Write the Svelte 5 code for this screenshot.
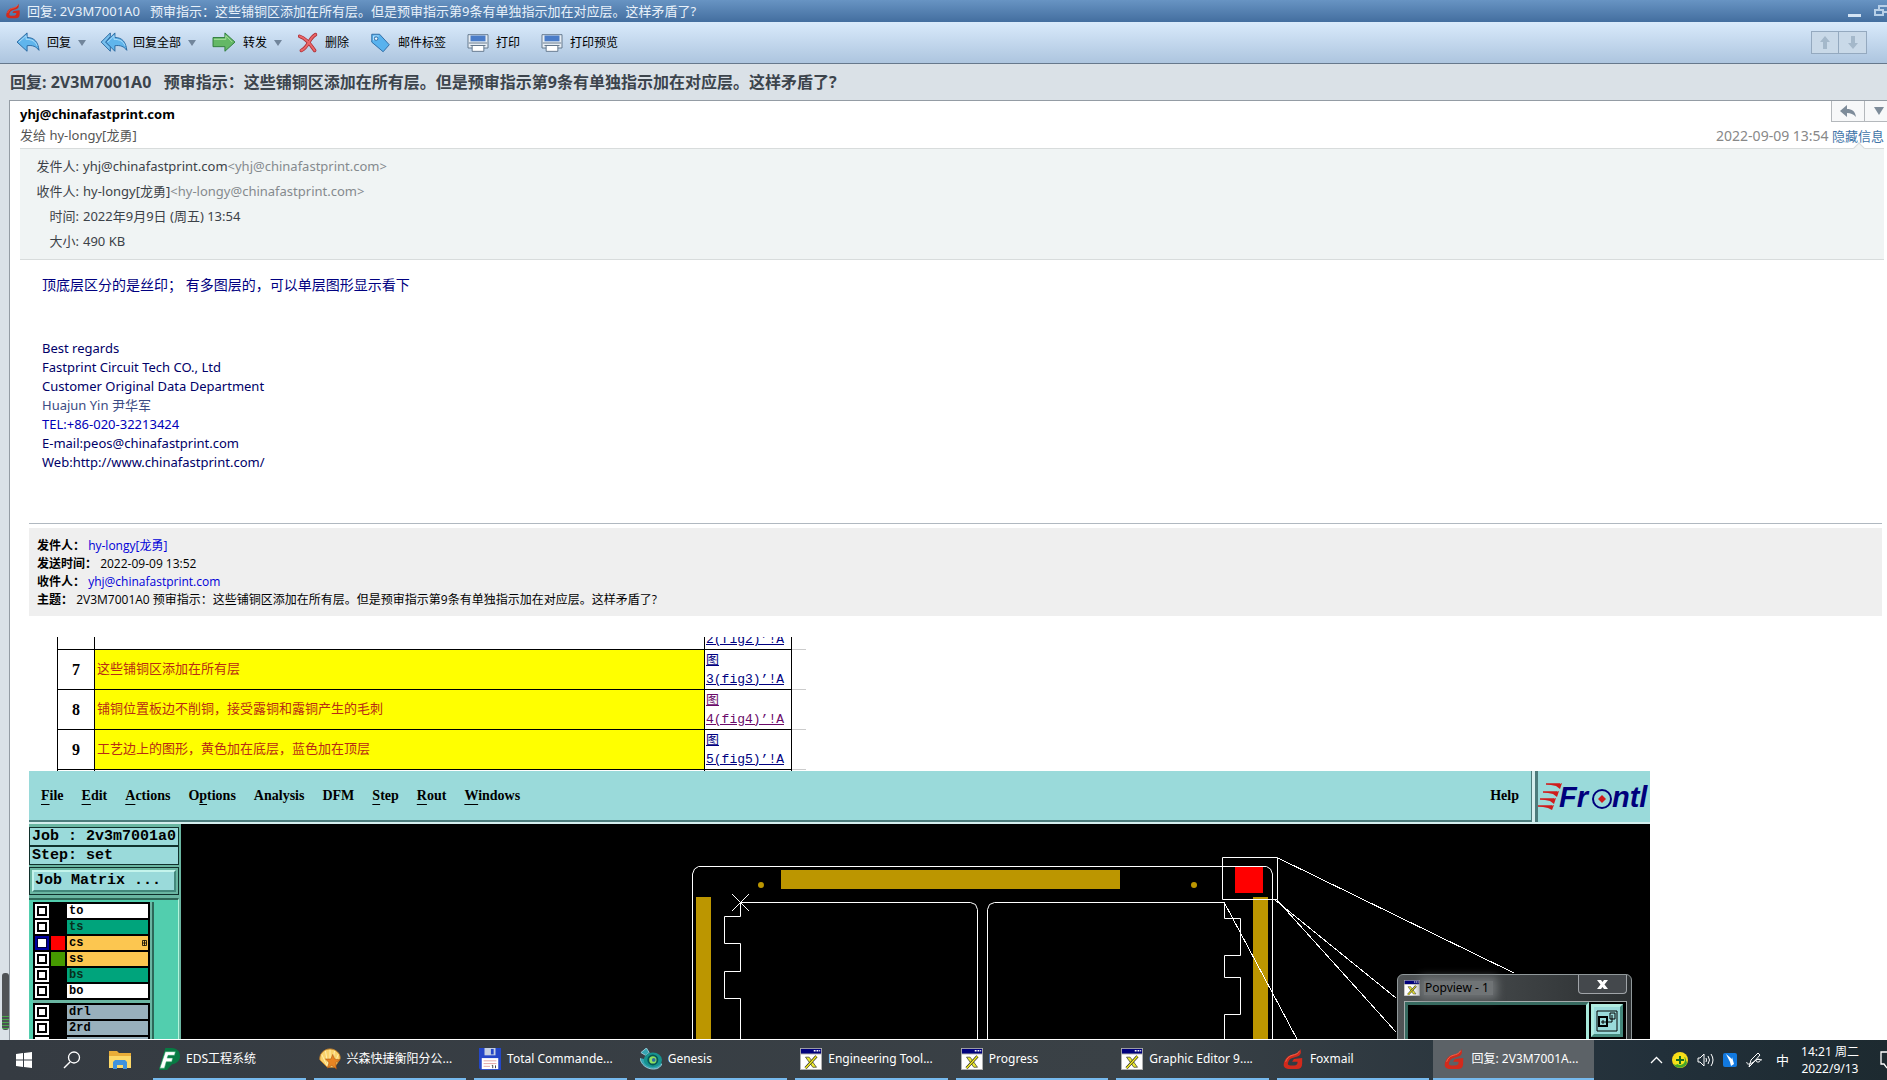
<script lang="ts">
	const subject = '2V3M7001A0\u00a0\u00a0 预审指示：这些铺铜区添加在所有层。但是预审指示第9条有单独指示加在对应层。这样矛盾了?';

	const tools = [
		{ icon: 'reply', label: '回复', menu: true },
		{ icon: 'replyall', label: '回复全部', menu: true },
		{ icon: 'forward', label: '转发', menu: true },
		{ icon: 'delete', label: '删除', menu: false },
		{ icon: 'tag', label: '邮件标签', menu: false },
		{ icon: 'print', label: '打印', menu: false },
		{ icon: 'print', label: '打印预览', menu: false },
	];

	const rows = [
		{ n: 7, text: '这些铺铜区添加在所有层', link: '3(fig3)’!A', visited: false },
		{ n: 8, text: '铺铜位置板边不削铜，接受露铜和露铜产生的毛刺', link: '4(fig4)’!A', visited: true },
		{ n: 9, text: '工艺边上的图形，黄色加在底层，蓝色加在顶层', link: '5(fig5)’!A', visited: false },
	];

	// [before, mnemonic, after]
	const menus = [
		['', 'F', 'ile'],
		['', 'E', 'dit'],
		['', 'A', 'ctions'],
		['O', 'p', 'tions'],
		['Analysis', '', ''],
		['DFM', '', ''],
		['', 'S', 'tep'],
		['', 'R', 'out'],
		['', 'W', 'indows'],
	];

	const layerGroups = [
		[
			{ name: 'to', kind: 'silk', swatch: '' },
			{ name: 'ts', kind: 'mask', swatch: '' },
			{ name: 'cs', kind: 'signal', swatch: 'red', active: true },
			{ name: 'ss', kind: 'signal', swatch: 'green' },
			{ name: 'bs', kind: 'mask', swatch: '' },
			{ name: 'bo', kind: 'silk', swatch: '' },
		],
		[
			{ name: 'drl', kind: 'drill', swatch: '' },
			{ name: '2rd', kind: 'drill', swatch: '' },
			{ name: '', kind: 'drill', swatch: '' },
		],
	];

	const tasks = [
		{ icon: 'eds', label: 'EDS工程系统' },
		{ icon: 'shell', label: '兴森快捷衡阳分公...' },
		{ icon: 'disk', label: 'Total Commande...' },
		{ icon: 'genesis', label: 'Genesis' },
		{ icon: 'xwin', label: 'Engineering Tool...' },
		{ icon: 'xwin', label: 'Progress' },
		{ icon: 'xwin', label: 'Graphic Editor 9....' },
		{ icon: 'fox', label: 'Foxmail' },
		{ icon: 'fox', label: '回复: 2V3M7001A...', active: true },
	];
</script>

{#snippet fox(size: number)}
	<svg width={size} height={size} viewBox="0 0 24 24">
		<path d="M20 1c-1 4-4 5-8 6C6 8 3 12 2 17c-1 4 2 6 7 6h7c4 0 6-2 6-6v-6l-9 1-2 3h6c0 3-1 4-4 4H9c-3 0-3-2-2-4 1-3 3-4 7-5 5-1 8-3 6-9z" fill="#d22a1c" />
		<path d="M19 3c-1 3-4 4-8 5-4 1-6 4-7 7" fill="none" stroke="#f06a50" />
	</svg>
{/snippet}

{#snippet xwin(size: number)}
	<svg width={size} height={size} viewBox="0 0 24 24">
		<path d="M0 0h24v24H0z" fill="#aaa" />
		<path d="M1 1h22v5H1z" fill="#00007c" />
		<path d="M15 3h2M18 3h2M21 3h1" stroke="#fff" stroke-width="1.5" />
		<path d="M1 7h22v16H1z" fill="#fff" />
		<path d="M6 10h4l8 11h-4z" fill="#ecea30" stroke="#222" stroke-width=".7" />
		<path d="M18 9 6 22" stroke="#222" stroke-width="3" />
		<path d="M18 9 6 22" stroke="#f5ed20" stroke-width="1.6" />
	</svg>
{/snippet}

{#snippet toolIcon(name: string)}
	<svg class="tool-icon {name}" viewBox="0 0 24 24">
		{#if name === 'reply'}
			<path d="M0 11 11 1v5c8 0 12 5 13 14-3-4-7-6-13-5v6z" fill="#60b5ec" stroke="#24649c" />
			<path d="M2 11 10 4v4c6 0 10 2 12 7" fill="none" stroke="#b2e0fb" />
		{:else if name === 'replyall'}
			<path d="M-2 11 8 1v4l-5 6 5 5v5z" fill="#78c0ee" stroke="#24649c" />
			<path d="M3 11 13 1v5c8 0 12 5 13 14-3-4-7-6-13-5v6z" fill="#60b5ec" stroke="#24649c" />
			<path d="m5 11 7-7v4c6 0 10 2 12 7" fill="none" stroke="#b2e0fb" />
		{:else if name === 'forward'}
			<path d="M0 6h13V1l11 10-11 10v-5H0z" fill="#64b866" stroke="#2d7b3a" />
			<path d="M1 8h13V4l7 7" fill="none" stroke="#b0e2a0" />
		{:else if name === 'delete'}
			<path d="M2 4c7 2 12 8 18 17M21 2C13 6 13 17 4 21" fill="none" stroke="#a92b33" stroke-width="4.2" stroke-linecap="round" />
			<path d="M2 4c7 2 12 8 18 17M21 2C13 6 13 17 4 21" fill="none" stroke="#ea6668" stroke-width="2.4" stroke-linecap="round" />
		{:else if name === 'tag'}
			<path d="M2 2h9l11 12-7 8L2 11z" fill="#58b2ee" stroke="#28659e" />
			<path d="M4 9V4h6" fill="none" stroke="#bfe5ff" />
			<circle cx="7" cy="7" r="2" fill="#eef8ff" stroke="#28659e" />
		{:else}
			<path d="M0 2h24v16H0z" fill="#e6edf4" stroke="#52687e" />
			<path d="M3 3h18v7H3z" fill="#4a7cc8" />
			<path d="M1 12h22M3 15h18" stroke="#52687e" />
			<path d="M5 15h14v7H5z" fill="#fff" stroke="#52687e" />
		{/if}
	</svg>
{/snippet}

<div class="desktop">
	<header class="titlebar">
		{@render fox(16)}
		<span class="title">回复: {subject}</span>
		<button class="win-btn" aria-label="Minimize">
			<svg width="14" height="16" viewBox="0 0 14 16"><path d="M0 11h13v3H0z" fill="#d4e4f4" /></svg>
		</button>
		<button class="win-btn" aria-label="Restore">
			<svg width="13" height="16" viewBox="0 0 13 16"><path d="M5 6V3h9v6h-4M1 7h8v5H1z" fill="none" stroke="#b8d0e8" stroke-width="2" /></svg>
		</button>
	</header>

	<nav class="toolbar">
		{#each tools as tool}
			<button class="tool" class:plain={!tool.menu}>
				{@render toolIcon(tool.icon)}
				<span>{tool.label}</span>
				{#if tool.menu}<i class="caret"></i>{/if}
			</button>
		{/each}
		<div class="pager">
			<button aria-label="Previous">
				<svg width="12" height="14" viewBox="0 0 12 14"><path d="m6 0 5 6H8v7H4V6H1z" fill="#a4b8ca" /></svg>
			</button>
			<button aria-label="Next">
				<svg width="12" height="14" viewBox="0 0 12 14"><path d="m6 13 5-6H8V0H4v7H1z" fill="#a4b8ca" /></svg>
			</button>
		</div>
	</nav>

	<h1 class="subject">回复: {subject}</h1>

	<div class="workspace">
		<aside class="gutter"><span class="meter"></span></aside>
		<main class="mail">
			<div class="mail-head">
				<div>
					<strong>yhj@chinafastprint.com</strong>
					<div class="to">发给 hy-longy[龙勇]</div>
				</div>
				<div class="head-right">
					<div class="quick">
						<button aria-label="Reply">
							<svg width="16" height="13" viewBox="0 0 16 13"><path d="M0 6 7 0v4c5 0 8 2 9 8-3-3-5-4-9-4v4z" fill="#7e8c9a" /></svg>
						</button>
						<button aria-label="More"><i class="caret"></i></button>
					</div>
					<div class="when"><time>2022-09-09 13:54</time> <a href="#info">隐藏信息</a></div>
				</div>
			</div>

			<dl class="details" id="info">
				<dt>发件人:</dt>
				<dd>yhj@chinafastprint.com<span>&lt;yhj@chinafastprint.com&gt;</span></dd>
				<dt>收件人:</dt>
				<dd>hy-longy[龙勇]<span>&lt;hy-longy@chinafastprint.com&gt;</span></dd>
				<dt>时间:</dt>
				<dd>2022年9月9日 (周五) 13:54</dd>
				<dt>大小:</dt>
				<dd>490 KB</dd>
			</dl>

			<article>
				<p class="message">顶底层区分的是丝印； 有多图层的，可以单层图形显示看下</p>
				<address>
					<div>Best regards</div>
					<div>Fastprint Circuit Tech CO., Ltd</div>
					<div>Customer Original Data Department</div>
					<div class="name">Huajun Yin 尹华军</div>
					<div class="tel">TEL:+86-020-32213424</div>
					<div>E-mail:peos@chinafastprint.com</div>
					<div>Web:http://www.chinafastprint.com/</div>
				</address>

				<div class="quote">
					<div><b>发件人：</b> <a href="#from">hy-longy[龙勇]</a></div>
					<div><b>发送时间：</b> 2022-09-09 13:52</div>
					<div><b>收件人：</b> <a href="#to">yhj@chinafastprint.com</a></div>
					<div><b>主题：</b> 2V3M7001A0 预审指示：这些铺铜区添加在所有层。但是预审指示第9条有单独指示加在对应层。这样矛盾了?</div>
				</div>

				<div class="sheet">
					<table>
						<tbody>
							<tr>
								<td class="num"></td>
								<td class="blank"></td>
								<td class="ref"><a href="#fig2">2(fig2)’!A</a></td>
								<td class="tail"></td>
							</tr>
							{#each rows as row}
								<tr>
									<td class="num">{row.n}</td>
									<td class="note">{row.text}</td>
									<td class="ref"><a href="#fig" class:visited={row.visited}>图<br />{row.link}</a></td>
									<td class="tail"></td>
								</tr>
							{/each}
							<tr class="last">
								<td class="num"></td>
								<td class="blank"></td>
								<td class="ref"></td>
								<td class="tail"></td>
							</tr>
						</tbody>
					</table>
				</div>

				<section class="editor">
					<div class="menubar">
						<div class="menus">
							{#each menus as [pre, key, post]}
								<button>{pre}<u>{key}</u>{post}</button>
							{/each}
							<button class="help">Help</button>
						</div>
						<div class="brand">
							<svg width="112" height="48" viewBox="0 0 112 48">
								<path d="M8 13h14l2-1-2 6-4-3zM5 21h13l3-1-2 6-4-3zM2 28h13l3-1-2 6-4-3zM0 35h13l3-1-2 5-4-2z" fill="#d01c1c" />
								<path d="M8 13h14M5 21h14M2 28h14M0 35h14" stroke="#d01c1c" stroke-width="1.500" />
								<text x="21" y="36" class="logo">Fr</text>
								<circle cx="64" cy="28" r="9" fill="none" stroke="#00007c" stroke-width="2" />
								<path d="m64 24 4 4-4 4-4-4z" fill="#d01c1c" />
								<text x="74" y="36" class="logo">ntl</text>
							</svg>
						</div>
					</div>
					<div class="editor-body">
						<div class="side">
							<div class="job">Job : 2v3m7001a0</div>
							<div class="job">Step: set</div>
							<div class="matrix"><button>Job Matrix ...</button></div>
							<div class="layer-panel">
								<div class="layers">
									{#each layerGroups as group}
										<div class="group">
											{#each group as layer}
												<label class="layer">
													<input type="checkbox" checked={layer.active} />
													<i class="swatch {layer.swatch}"></i>
													<span class={layer.kind}>
														{layer.name}
														{#if layer.active}
															<svg width="6" height="8" viewBox="0 0 6 8"><path d="M.5 1.500h4v5h-4zM.5 4h4M2.500 1.500v5" fill="none" stroke="#000" stroke-width=".8" /></svg>
														{/if}
													</span>
												</label>
											{/each}
										</div>
									{/each}
								</div>
							</div>
						</div>
						<div class="canvas">
							<svg width="1469" height="215" viewBox="181 825 1469 215">
								<g fill="#bc9600">
									<path d="M781 871h339v19H781zM696 898h15v142h-15zM1253 898h15v142h-15z" />
									<circle cx="761" cy="886" r="3" />
									<circle cx="1194" cy="886" r="3" />
								</g>
								<path d="M1235 867h28v27h-28z" fill="#f00" />
								<g class="outline">
									<path d="M692.5 1040V875l2-5 4-2.5h568l4 2.5 2 5v165" />
									<path d="M740.5 1040V999.5h-16v-27h16v-28h-16v-27h16v-14h230l5 2 2 5V1040" />
									<path d="M987.5 1040V910.5l2-5 5-2h230v16h16v37h-16v22h16v37h-16V1040" />
									<path d="M1222.5 858.5h55v42h-55z" />
								</g>
								<path class="rays" d="m732 895 17 17m0-17-17 17M1278 859l236 115M1275 901l121 98M1277 901l119 132M1224 903l73 137" />
							</svg>
							<div class="popview">
								<div class="pop-title">
									{@render xwin(16)}
									<span>Popview - 1</span>
									<button aria-label="Close">
										<svg width="11" height="9" viewBox="0 0 11 9"><path d="M0 0h4l1.500 2L7 0h4L7.500 4.500 11 9H7L5.500 7 4 9H0l3.500-4.500z" fill="#fff" /></svg>
									</button>
								</div>
								<div class="pop-body">
									<div class="pop-view"></div>
									<button class="pop-tool" aria-label="Zoom to popview">
										<svg width="22" height="22" viewBox="0 0 22 22">
											<path d="M1 1h20v20H1z" fill="none" stroke="#000" />
											<path d="M3 7h8v9H3z" fill="none" stroke="#000" stroke-width="2" />
											<path d="M14 3h5v6h-5zM5 12h11V5M7 10v4" fill="none" stroke="#000" />
										</svg>
									</button>
								</div>
							</div>
						</div>
					</div>
				</section>
			</article>
		</main>
	</div>

	<footer class="taskbar">
		<div class="pinned">
			<button aria-label="Start">
				<svg width="16" height="16" viewBox="0 0 16 16"><path d="m0 2 7-1v6.500H0zM8 1l8-1v7.500H8zM0 8.500h7V15l-7-1zM8 8.500h8V16l-8-1z" fill="#fff" /></svg>
			</button>
			<button aria-label="Search">
				<svg width="18" height="18" viewBox="0 0 18 18"><circle cx="11" cy="6.500" r="5.500" fill="none" stroke="#fff" stroke-width="1.300" /><path d="m7 11-6 6" stroke="#fff" stroke-width="1.500" /></svg>
			</button>
			<button aria-label="Explorer">
				<svg width="22" height="20" viewBox="0 0 22 20"><path d="M0 1h8l2 2h12v15H0z" fill="#e8ac38" /><path d="M0 6h22v12H0z" fill="#fcd868" /><path d="M4 19v-7l2-2h10l2 2v7h-4v-4H8v4z" fill="#4092dc" /></svg>
			</button>
		</div>
		<div class="tasks">
			{#each tasks as task}
				<button class="task" class:active={task.active}>
					{#if task.icon === 'fox'}
						{@render fox(22)}
					{:else if task.icon === 'xwin'}
						{@render xwin(22)}
					{:else}
						<svg width="22" height="22" viewBox="0 0 24 24">
							{#if task.icon === 'eds'}
								<path d="M8 0h7c6 0 9 4 9 9s-4 8-9 9l-5 6H1z" fill="#087a43" />
								<path d="M8 4h11l-1 4h-7l-1 3h6l-1 4H9l-2 7H2z" fill="#fff" stroke="#32a66a" stroke-width=".6" />
							{:else if task.icon === 'shell'}
								<path d="M12 1C5 1 0 7 1 13l8 8h8l6-9C24 6 18 1 12 1z" fill="#f9d26b" stroke="#c6812b" />
								<path d="M12 2v18M7 3l3 17M3 7l6 13M17 3l-3 17M21 7l-5 13" stroke="#fff0b4" />
								<path d="m15 7 2 5 6 1-5 3 1 7-5-4-5 3 2-6-4-4h6z" fill="#e88422" stroke="#a8520e" stroke-width=".6" />
							{:else if task.icon === 'disk'}
								<path d="M0 0h24v24H2l-2-2z" fill="#2447c8" />
								<path d="M6 0h12v8H6z" fill="#c5d0e2" />
								<path d="M13 1h3v6h-3z" fill="#2447c8" />
								<path d="M3 11h18v12H3z" fill="#fff" />
								<path d="M5 14h14M5 17h14M5 20h7" stroke="#e0a0a0" />
								<path d="M14 19h1v3M18 19v3" fill="none" stroke="#333" />
							{:else}
								<path d="m1 5 6-5 3 5-4 3zM0 11c1 7 7 12 15 12 5 0 8-3 9-6" fill="#36a5b2" stroke="#9ccfdc" />
								<ellipse cx="14" cy="13" rx="10" ry="8" fill="#16928f" />
								<circle cx="14" cy="13" r="5" fill="#8de060" stroke="#075656" stroke-width="2" />
								<circle cx="15" cy="13" r="2" fill="#2d6aa3" />
							{/if}
						</svg>
					{/if}
					<span>{task.label}</span>
				</button>
			{/each}
		</div>
		<div class="tray">
			<svg width="13" height="8" viewBox="0 0 13 8"><path d="m1 7 5.500-5.500L12 7" fill="none" stroke="#fff" stroke-width="1.300" /></svg>
			<svg width="16" height="16" viewBox="0 0 16 16"><circle cx="8" cy="8" r="8" fill="#f8dc18" /><path d="M1 12a8 8 0 0 0 14-1l-2-6-9 8z" fill="#43a62a" /><circle cx="8" cy="8" r="5" fill="#f5e51b" /><path d="M8 4v8M4 8h8" stroke="#176b21" stroke-width="2" /></svg>
			<svg width="17" height="14" viewBox="0 0 17 14"><path d="M1 5h2l4-4v12L3 9H1zM9 5q1 2 0 4M11 3q3 4 0 8M14 1q4 6 0 12" fill="none" stroke="#fff" /></svg>
			<svg width="14" height="14" viewBox="0 0 14 14"><rect width="14" height="14" rx="2" fill="#1279df" /><path d="m3 1 6 5V4l2 7-3 2-1-4z" fill="#fff" /></svg>
			<svg width="17" height="16" viewBox="0 0 17 16"><path d="M3 15 5 8l7-7 2 2-7 8zM1 10c-1 2 2 3 5 1 4-3 7-5 8-3s-3 3-4 1 3-2 6-1" fill="none" stroke="#fff" /></svg>
			<span class="ime">中</span>
			<div class="clock">
				<div>14:21 周二</div>
				<div>2022/9/13</div>
			</div>
			<svg width="7" height="18" viewBox="0 0 7 18"><path d="M7 1H1v12h3l3 4" fill="none" stroke="#fff" stroke-width="1.300" /></svg>
		</div>
	</footer>
</div>

<style>
	:global(body) {
		margin: 0;
		overflow: hidden;
	}

	.desktop {
		height: 100vh;
		display: flex;
		flex-direction: column;
		font-family: 'Noto Sans', 'Noto Sans CJK SC', sans-serif;
		font-size: 13px;
		line-height: 20px;
		color: #333;
		background: #dae1e7;
	}

	button {
		border: 0;
		padding: 0;
		background: none;
		font: inherit;
		color: inherit;
	}

	svg { flex-shrink: 0; display: block; }

	a { text-decoration: none; }

	.titlebar {
		height: 22px;
		display: flex;
		align-items: center;
		gap: 6px;
		padding-left: 5px;
		background: linear-gradient(#6894c3, #436e9f);
		color: #e8f1fa;
		flex-shrink: 0;
	}

	.title {
		flex: 1;
		white-space: nowrap;
		overflow: hidden;
		line-height: 20px;
	}

	.win-btn + .win-btn { margin-left: 6px; }

	.toolbar {
		height: 41px;
		flex-shrink: 0;
		display: flex;
		align-items: center;
		gap: 16px;
		padding: 0 20px 0 16px;
		background: linear-gradient(#d9eafb, #adc5df);
		border-bottom: 1px solid #66788c;
		font-size: 12px;
		color: #000;
	}

	.tool {
		display: flex;
		align-items: center;
		gap: 7px;
	}

	.tool.plain { margin-right: 5px; }

	.tool-icon { width: 24px; height: 22px; overflow: visible; }
	.tool-icon.delete { width: 20px; }
	.tool-icon.tag { width: 21px; }

	.tool-icon.print {
		width: 22px;
		height: 20px;
	}

	.caret {
		border: 4px solid transparent;
		border-top: 6px solid #71859b;
		border-bottom: 0;
	}

	.pager {
		margin-left: auto;
		display: flex;
	}

	.pager button {
		width: 28px;
		height: 23px;
		display: grid;
		place-items: center;
		border: 1px solid #94a9bf;
		background: #c9d9e8;
	}

	.pager button + button { border-left: 0; }

	.subject {
		margin: 0;
		padding: 0 10px;
		height: 36px;
		flex-shrink: 0;
		font-size: 16px;
		font-weight: 700;
		line-height: 37px;
		white-space: nowrap;
		color: #3c444c;
	}

	.workspace {
		flex: 1;
		min-height: 0;
		display: flex;
	}

	.gutter {
		width: 9px;
		flex-shrink: 0;
		display: flex;
		flex-direction: column;
		justify-content: flex-end;
		padding-bottom: 10px;
	}

	.meter {
		height: 57px;
		margin-left: 2px;
		border-radius: 3px;
		background: repeating-linear-gradient(#49a74a 0 1px, #4c5054 1px 3px) 0 100% / 100% 14px no-repeat #505356;
	}

	.mail {
		flex: 1;
		min-width: 0;
		overflow: hidden;
		background: #fff;
		border: solid #949ca4;
		border-width: 1px 0 0 1px;
	}

	.mail-head {
		height: 47px;
		display: flex;
		justify-content: space-between;
		padding-left: 10px;
		line-height: 21px;
	}

	.mail-head > div:first-child { padding-top: 3px; }

	.mail-head strong { font-weight: 700; color: #000; }

	.to { color: #555; }

	.quick {
		display: flex;
		justify-content: flex-end;
	}

	.quick button {
		width: 33px;
		height: 21px;
		box-sizing: border-box;
		display: grid;
		place-items: center;
		border: solid #b4b8bc;
		border-width: 0 0 1px 1px;
		background: #f7f8f9;
	}

	.quick button:last-child { width: 23px; padding-left: 5px; }

	.quick .caret { border-width: 8px 5px 0; border-top-color: #7e8c9a; }

	.when {
		padding: 3px 3px 0 0;
		color: #888;
	}

	.when time { font-size: 14px; }
	.when a { color: #4074a8; }

	.details {
		position: relative;
		margin: 0 3px 0 10px;
		padding: 5px 17px;
		display: grid;
		grid-template-columns: 42px 1fr;
		column-gap: 4px;
		line-height: 25px;
		white-space: nowrap;
		background: #f0f4f4;
		border: solid #d8dcdc;
		border-width: 1px 0;
		color: #3c4248;
	}

	/* notch pointing at the hide-details link */
	.details::before {
		content: '';
		position: absolute;
		right: 21px;
		top: -5px;
		width: 7px;
		height: 7px;
		border: solid #d8dcdc;
		border-width: 1px 0 0 1px;
		background: #f0f4f4;
		transform: rotate(45deg);
	}

	.details dt {
		display: flex;
		justify-content: flex-end;
	}

	.details dd { margin: 0; }
	.details span { color: #858a8e; }

	article { padding: 15px 5px 0 19px; }

	.message {
		margin: 0 13px;
		font-size: 14px;
		line-height: 20px;
		color: #000080;
	}

	address {
		margin: 44px 13px 56px;
		font-style: normal;
		line-height: 19px;
		color: #000068;
	}

	.name { color: #3c4c84; }
	.tel { color: #0000b8; }

	.quote {
		position: relative;
		padding: 9px 8px 7px;
		font-family: 'Open Sans', 'Noto Sans CJK SC', sans-serif;
		font-size: 12px;
		line-height: 18px;
		background: #efefef;
		color: #000;
	}

	.quote::before {
		content: '';
		position: absolute;
		left: 0;
		right: 0;
		top: -5px;
		border-top: 1px solid #b0b8c0;
	}

	.quote a { color: #0000d8; }

	.sheet {
		height: 134px;
		margin: 21px 0 0 28px;
		overflow: hidden;
		display: flex;
		align-items: flex-end;
	}

	table {
		border-collapse: collapse;
		table-layout: fixed;
		width: 749px;
	}

	td {
		height: 39px;
		padding: 0;
		border: 1px solid #000;
	}

	tr:first-child td { vertical-align: bottom; }

	.last td { height: 1px; border-bottom: 0; }

	.num {
		width: 36px;
		text-align: center;
		font: bold 16px 'Liberation Serif', serif;
		color: #000;
	}

	.note {
		height: 35px;
		padding: 0 0 4px 2px;
		background: #ff0;
		color: #b82c14;
		font-family: 'Noto Sans CJK SC', sans-serif;
	}

	.ref {
		width: 85px;
		padding-left: 1px;
		font-family: 'Liberation Mono', 'Noto Sans CJK SC', monospace;
		line-height: 19px;
	}

	.ref a { color: #000080; text-decoration: underline; }
	.ref a.visited { color: #6a0a6a; }

	.tail {
		width: 14px;
		border-right: 0;
		border-color: #ccc;
		border-left-color: #000;
	}

	.editor {
		max-width: 1621px;
		color: #000;
	}

	.menubar {
		height: 53px;
		box-sizing: border-box;
		display: flex;
		gap: 3px;
		background: #d4eeee;
		padding-bottom: 2px;
	}

	.menus {
		flex: 1;
		display: flex;
		align-items: center;
		gap: 18px;
		padding: 0 12px;
		background: #9adada;
		border: solid #4c7c7c;
		border-width: 0 1px 2px 0;
		font: bold 14px 'Liberation Serif', serif;
	}

	.menus u { text-underline-offset: 4px; }
	.help { margin-left: auto; }

	.brand {
		width: 112px;
		overflow: hidden;
		background: #9adada;
		border-left: 3px solid #4c7c7c;
	}

	.logo {
		font: italic bold 29px 'Liberation Sans', sans-serif;
		fill: #00007c;
	}

	.editor-body {
		height: 215px;
		display: flex;
		overflow: hidden;
		background: #000;
	}

	.side {
		width: 150px;
		padding: 3px 2px 0 0;
		background: #6ab6a2;
		font: bold 15px/18px 'Liberation Mono', monospace;
	}

	.job, .matrix { border: 1px solid #10302c; }

	.job {
		padding-left: 2px;
		height: 17px;
		background: #9adada;
		white-space: nowrap;
	}

	.matrix {
		margin-top: 2px;
		padding: 2px;
	}

	.matrix button {
		width: 100%;
		padding-left: 1px;
		border: 2px solid #c4f4ec;
		border-right-color: #44887c;
		border-bottom-color: #44887c;
		background: #9adada;
		text-align: left;
		line-height: 18px;
	}

	.layer-panel {
		margin-top: 3px;
		padding: 2px 0 0 4px;
		background: #52ceae;
		border-top: 2px solid #2d6858;
		border-right: 1px solid #b4f4dc;
	}

	.layers {
		width: 119px;
		display: flex;
		flex-direction: column;
		gap: 3px;
		background: #6ab6a2;
		border-right: 2px solid #2d6858;
	}

	.group {
		width: 117px;
		padding: 1px 0;
		display: grid;
		background: #000;
	}

	.layer {
		height: 16px;
		display: grid;
		grid-template-columns: 14px 14px 1fr;
		align-items: center;
		column-gap: 2px;
		padding: 0 2px;
	}

	.layer input {
		appearance: none;
		margin: 0;
		width: 14px;
		height: 14px;
		border: 2px solid #fff;
		background: #fff;
		box-shadow: inset 0 0 0 2px #000;
	}

	.layer input:checked {
		border-color: #0000a0;
		box-shadow: inset 0 0 0 1px #00003c;
	}

	.swatch { height: 14px; }
	.swatch.red { background: #f00; }
	.swatch.green { background: #469a00; }

	.layer span {
		height: 14px;
		padding-left: 2px;
		display: flex;
		align-items: center;
		justify-content: space-between;
		font: bold 12px/14px 'Liberation Mono', monospace;
	}

	.silk { background: #fff; }
	.mask { background: #00a47c; color: #08301c; }
	.signal { background: #fcc650; }
	.drill { background: #98b0bc; }

	.canvas {
		flex: 1;
		min-width: 0;
		position: relative;
		overflow: hidden;
	}

	.outline {
		fill: none;
		stroke: #fff;
	}

	.rays {
		fill: none;
		stroke: #fff;
		shape-rendering: crispEdges;
	}

	/* floating zoom window on the board canvas */
	.popview {
		position: absolute;
		left: 1216px;
		top: 150px;
		width: 235px;
		height: 80px;
		box-sizing: border-box;
		padding: 0 4px 0 6px;
		border: 1px solid #90989a;
		border-radius: 6px 6px 0 0;
		background: linear-gradient(90deg, #505456, #2c3032);
	}

	.pop-title {
		height: 26px;
		display: flex;
		align-items: center;
		gap: 4px;
		font-size: 12px;
		color: #000;
	}

	.pop-title span {
		padding: 0 4px 0 1px;
		background: #707476;
		box-shadow: 0 0 8px 4px #707476;
		line-height: 14px;
	}

	.pop-title button {
		align-self: flex-start;
		margin-left: auto;
		width: 49px;
		height: 19px;
		display: grid;
		place-items: center;
		border: 1px solid #a0a4a8;
		border-top: 0;
		border-radius: 0 0 4px 4px;
		background: #44484c;
	}

	.pop-body {
		height: 60px;
		display: flex;
		gap: 2px;
		padding-right: 3px;
		border: 1px solid #a4acac;
		background: #000;
	}

	.pop-view {
		flex: 1;
		border: 3px solid #376a60;
		border-right-color: #a8eadc;
	}

	.pop-tool {
		width: 32px;
		height: 33px;
		margin-top: 2px;
		display: grid;
		place-items: center;
		border: 3px solid #b0ece0;
		border-right-color: #44887c;
		border-bottom-color: #44887c;
		background: #9adada;
	}

	.taskbar {
		height: 40px;
		flex-shrink: 0;
		display: flex;
		justify-content: space-between;
		background: linear-gradient(90deg, #353b42, #3a4146 60%, #22303a 88%, #1d2a30);
		color: #fff;
		font-size: 12px;
		line-height: 18px;
	}

	.pinned {
		width: 149px;
		display: grid;
		grid-template-columns: repeat(3, 48px);
	}

	.pinned button {
		display: grid;
		place-items: center;
	}

	.tasks {
		flex: 0 1 1445px;
		min-width: 0;
		display: grid;
		grid-template-columns: repeat(9, minmax(0, 1fr));
	}

	.task {
		margin: 0 4px;
		padding-left: 5px;
		display: flex;
		align-items: center;
		gap: 6px;
		min-width: 0;
		border-bottom: 2px solid #76b9ed;
		white-space: nowrap;
		overflow: hidden;
	}

	.task.active {
		margin: 0;
		padding-left: 10px;
		background: #5c6267;
	}

	.tray {
		flex: 1;
		display: flex;
		align-items: center;
		justify-content: flex-end;
		gap: 9px;
	}

	.ime {
		margin: 0 1px 0 4px;
		font-size: 13px;
	}

	.clock {
		width: 60px;
		margin: 0 11px 0 1px;
		text-align: center;
		line-height: 17px;
		white-space: nowrap;
	}
</style>
